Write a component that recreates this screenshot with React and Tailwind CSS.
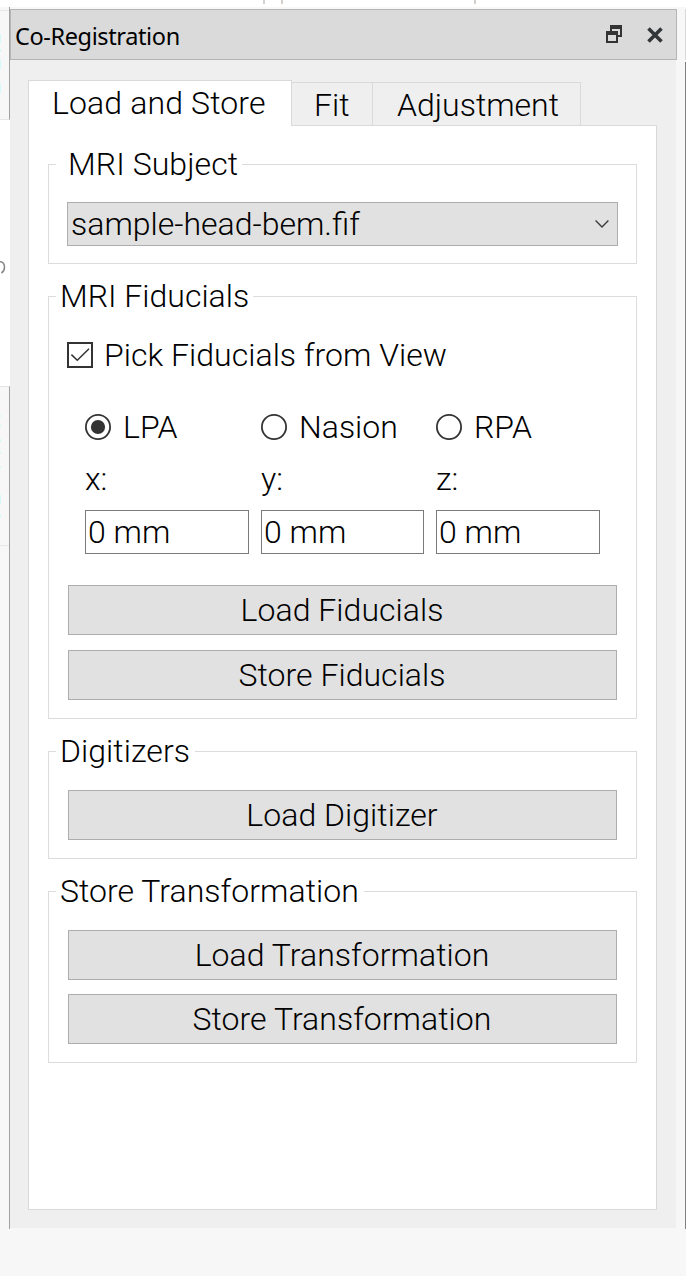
import React from "react";

function Group({ title, legendClass, className, children }) {
  return (
    <section className={"w-[589px] border border-[#dcdcdc] " + className}>
      <div className="-mt-5 ml-[7px] flex h-[38px]">
        <h2 className={"whitespace-nowrap bg-white leading-[38px] " + legendClass}>{title}</h2>
      </div>
      {children}
    </section>
  );
}

function PushButton({ children }) {
  return (
    <button className="ml-[19px] block h-[50px] w-[549px] border border-[#adadad] bg-[#e1e1e1] pr-px text-center leading-[48px] tracking-[0.04px]">
      {children}
    </button>
  );
}

function Axis({ label, axis, checked, className }) {
  return (
    <div className={className}>
      <label className="flex h-[38px] items-center gap-3">
        <svg width="26" height="26" viewBox="0 0 26 26" fill="none">
          <circle cx="13" cy="13" r="12.1" stroke="#333" strokeWidth="1.8" />
          {checked && <circle cx="13" cy="13" r="7.1" fill="#333" />}
        </svg>
        <span>{label}</span>
      </label>
      <div className="mt-[14px] h-[38px]">{axis}:</div>
      <div className="mt-3 h-11 border border-[#7a7a7a] bg-white pl-[2px] leading-[42px]">0 mm</div>
    </div>
  );
}

function TitleBar() {
  return (
    <header className="flex h-[51px] w-[667px] items-center border border-[#b5b5b5] bg-[#dadada] pl-1 pr-[13px]">
      <h1 className="grow pt-[2px] font-['Noto_Sans','Open_Sans',sans-serif] text-[23.5px] font-normal leading-8 tracking-[-0.38px]">
        Co-Registration
      </h1>
      <svg className="mr-6 -mt-px shrink-0" width="17" height="18" viewBox="0 0 17 18" fill="#333">
        <path d="M4 0H16V12H12V10H14V4H6V6H4Z" />
        <path fillRule="evenodd" d="M0 6H12V18H0ZM2 10H10V16H2Z" />
      </svg>
      <svg className="shrink-0" width="16" height="16" viewBox="0 0 16 16" fill="none">
        <path d="M1.5 1.5 14.5 14.5M14.5 1.5 1.5 14.5" stroke="#333638" strokeWidth="3.6" />
      </svg>
    </header>
  );
}

export default function App() {
  return (
    <div className="flex h-[1276px] w-[686px] flex-col overflow-hidden bg-[#f7f7f7] font-[Roboto,sans-serif] text-[32px] font-light leading-[38px] text-black">
      <div className="flex h-[7px] shrink-0 bg-white">
        <div className="ml-[263px] h-1 w-[2px] bg-[#d6d0cc]" />
        <div className="ml-4 h-1 w-[2px] bg-[#d6d0cc]" />
        <div className="ml-[191px] h-1 w-[2px] bg-[#d6d0cc]" />
      </div>
      <div className="flex h-[1222px] shrink-0">
        <aside className="flex w-[10px] shrink-0 flex-col">
          <div className="h-[113px] border-b border-r border-b-[#e6e6e6] border-r-[#a0a0a0] pt-[3px]">
            <div className="h-px bg-[#e8e8e8]" />
            <div className="mt-[23px] h-[9px] w-px bg-[#d5f8f8]" />
            <div className="mt-[6px] h-[3px] w-px bg-[#d5f8f8]" />
            <div className="mt-2 h-[9px] w-px bg-[#d5f8f8]" />
            <div className="mt-[15px] h-[9px] w-px bg-[#d5f8f8]" />
          </div>
          <div className="h-[266px] bg-white pt-[141px]">
            <svg width="6" height="13" viewBox="0 0 6 13" fill="none">
              <path d="M0 .8C3 .6 4.5 3 4.5 6.2S3 11 1.4 12" stroke="#858585" strokeWidth="1.5" />
            </svg>
          </div>
          <div className="grow border-r border-t border-r-[#a0a0a0] border-t-[#e4e4e4]">
            <div className="mt-[28px] h-[2px] w-px bg-[#d5f8f8]" />
            <div className="mt-2 h-[2px] w-px bg-[#d5f8f8]" />
            <div className="mt-3 h-[3px] w-px bg-[#d5f8f8]" />
            <div className="mt-[10px] h-[2px] w-px bg-[#d5f8f8]" />
            <div className="mt-3 h-[2px] w-px bg-[#d5f8f8]" />
            <div className="mt-[27px] h-[9px] w-px bg-[#d5f8f8]" />
            <div className="mt-[10px] h-[3px] w-px bg-[#d5f8f8]" />
            <div className="mt-[28px] h-px bg-[#e8e8e8]" />
          </div>
        </aside>

        <main className="mt-[2px] h-[1219px] w-[666px] shrink-0 bg-[#efefef]">
          <TitleBar />
          <div className="pl-[18px] pt-5">
            <nav className="flex h-[45px] items-end">
              <div className="-mb-px h-[46px] w-[264px] border border-b-0 border-[#d9d9d9] bg-white pl-[23px] pt-[3px] tracking-[0.13px]">
                Load and Store
              </div>
              <div className="h-[43px] w-[81px] border-r border-t border-[#d9d9d9] pl-[22px] pt-[3px]">Fit</div>
              <div className="h-[43px] w-[208px] border-r border-t border-[#d9d9d9] pl-6 pt-[3px]">Adjustment</div>
            </nav>
            <div className="flex">
              <div className="h-px w-px bg-[#d9d9d9]" />
              <div className="h-px w-[262px] bg-white" />
              <div className="h-px w-[366px] bg-[#d9d9d9]" />
            </div>
            <div className="flex h-[1084px] w-[629px] flex-col gap-8 border border-t-0 border-[#d9d9d9] bg-white pl-[19px] pt-[38px]">
              <Group title="MRI Subject" legendClass="w-[186px] pl-3 tracking-[0.08px]" className="h-[100px]">
                <div className="ml-[18px] mt-[19px] flex h-11 w-[551px] items-center justify-between border border-[#adadad] bg-[#e1e1e1] pl-[3px] pr-2">
                  <span>sample-head-bem.fif</span>
                  <svg width="14" height="8" viewBox="0 0 14 8" fill="none">
                    <path d="M.6.6 7 7 13.4.6" stroke="#3c3c3c" strokeWidth="1.4" />
                  </svg>
                </div>
              </Group>

              <Group title="MRI Fiducials" legendClass="w-[197px] pl-1" className="h-[423px]">
                <label className="ml-[18px] mt-[21px] flex h-[38px] items-center gap-[11px]">
                  <svg width="26" height="26" viewBox="0 0 26 26" fill="none">
                    <rect x="1" y="1" width="24" height="24" stroke="#333" strokeWidth="2" />
                    <path d="M4.4 12.6 10.3 18.3 22 6.8" stroke="#333" strokeWidth="1.5" />
                  </svg>
                  <span className="tracking-[0.03px]">Pick Fiducials from View</span>
                </label>
                <div className="ml-9 mt-[34px] flex gap-3">
                  <Axis label="LPA" axis="x" checked className="w-[164px]" />
                  <Axis label="Nasion" axis="y" className="w-[163px]" />
                  <Axis label="RPA" axis="z" className="w-[164px]" />
                </div>
                <div className="mt-[31px] flex flex-col gap-[15px]">
                  <PushButton>Load Fiducials</PushButton>
                  <PushButton>Store Fiducials</PushButton>
                </div>
              </Group>

              <Group title="Digitizers" legendClass="w-[139px] pl-1 tracking-[0.06px]" className="h-[108px]">
                <div className="mt-5">
                  <PushButton>Load Digitizer</PushButton>
                </div>
              </Group>

              <Group title="Store Transformation" legendClass="w-[308px] pl-1 tracking-[0.04px]" className="h-[172px]">
                <div className="mt-5 flex flex-col gap-[14px]">
                  <PushButton>Load Transformation</PushButton>
                  <PushButton>Store Transformation</PushButton>
                </div>
              </Group>
            </div>
          </div>
        </main>

        <aside className="flex w-[10px] shrink-0 flex-col items-end">
          <div className="mt-[2px] h-[51px] w-px bg-[#dadada]" />
          <div className="mt-[2px] w-px grow bg-[#808080]" />
        </aside>
      </div>
    </div>
  );
}
